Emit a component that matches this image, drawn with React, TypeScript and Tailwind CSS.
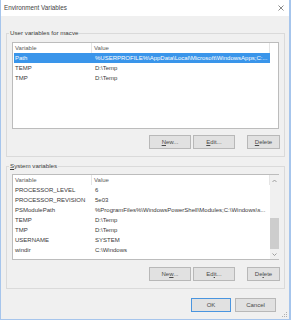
import React from "react";

type Variable = { name: string; value: string };

const userVars: Variable[] = [
    { name: "Path", value: "%USERPROFILE%\\AppData\\Local\\Microsoft\\WindowsApps;C:..." },
    { name: "TEMP", value: "D:\\Temp" },
    { name: "TMP", value: "D:\\Temp" },
];

const systemVars: Variable[] = [
    { name: "PROCESSOR_LEVEL", value: "6" },
    { name: "PROCESSOR_REVISION", value: "5e03" },
    { name: "PSModulePath", value: "%ProgramFiles%\\WindowsPowerShell\\Modules;C:\\Windows\\s..." },
    { name: "TEMP", value: "D:\\Temp" },
    { name: "TMP", value: "D:\\Temp" },
    { name: "USERNAME", value: "SYSTEM" },
    { name: "windir", value: "C:\\Windows" },
];

// label with one underlined access key, e.g. "Ne&w..."
function Mnemonic({ label }: { label: string }) {
    const i = label.indexOf("&");
    if (i < 0) return <>{label}</>;
    return (
        <>
            {label.slice(0, i)}
            <span className="underline underline-offset-1">{label[i + 1]}</span>
            {label.slice(i + 2)}
        </>
    );
}

function WinButton({ label, width, primary }: { label: string; width: string; primary?: boolean }) {
    return (
        <button
            className={`${width} h-[14px] flex items-center justify-center bg-[#e1e1e1] text-[#4a4a4a] leading-none border ${
                primary ? "border-[#4a95df]" : "border-[#b8b8b8]"
            }`}
        >
            <Mnemonic label={label} />
        </button>
    );
}

function ListHeader() {
    return (
        <div className="flex h-[10px] w-[256px] ml-[1px] items-center text-[#5c5c5c]">
            <div className="w-[78px] h-full flex items-center pl-[1px] border-r border-[#e5e5e5]">Variable</div>
            <div className="flex-1 h-full flex items-center pl-[2px] border-r border-[#e5e5e5]">Value</div>
        </div>
    );
}

function ListRow({ v, selected }: { v: Variable; selected?: boolean }) {
    return (
        <div
            className={`flex h-[10px] w-[256px] ml-[1px] items-center ${
                selected ? "bg-[#3a95ea] text-white" : "text-[#3a3a3a]"
            }`}
        >
            <div className="w-[79px] pl-[1px] whitespace-nowrap overflow-hidden">{v.name}</div>
            <div className="flex-1 pl-[2px] whitespace-nowrap overflow-hidden">{v.value}</div>
        </div>
    );
}

function ScrollBar() {
    return (
        <div className="w-[9px] h-full bg-[#f0f0f0] flex flex-col items-center">
            <svg width="9" height="11" viewBox="0 0 9 11" className="shrink-0">
                <path d="M2.5 7 L4.5 5 L6.5 7" fill="none" stroke="#8a8a8a" strokeWidth="0.8" />
            </svg>
            <div className="flex-1 w-full flex flex-col">
                <div className="h-[32px]" />
                <div className="h-[31px] w-full bg-[#cdcdcd]" />
            </div>
            <svg width="9" height="9" viewBox="0 0 9 9" className="shrink-0">
                <path d="M2.5 3.5 L4.5 5.5 L6.5 3.5" fill="none" stroke="#8a8a8a" strokeWidth="0.8" />
            </svg>
        </div>
    );
}

function ButtonRow({ labels, mt }: { labels: [string, string, string]; mt: string }) {
    return (
        <div className={`flex ${mt}`}>
            <div className="ml-[137px]">
                <WinButton label={labels[0]} width="w-[42px]" />
            </div>
            <div className="ml-[2px]">
                <WinButton label={labels[1]} width="w-[42px]" />
            </div>
            <div className="ml-[12px]">
                <WinButton label={labels[2]} width="w-[33px]" />
            </div>
        </div>
    );
}

export default function App() {
    return (
        <div className="w-[291px] h-[320px] flex flex-col bg-[#f0f0f0] border-l border-r-2 border-b border-[#a6c5ec] text-[6px] font-['Liberation_Sans',Arial,sans-serif] overflow-hidden">
            {/* TITLE BAR */}
            <div className="h-[16px] bg-white flex items-center justify-between pl-[3px] pr-[5px] shrink-0">
                <span className="text-[#444] text-[6.3px]">Environment Variables</span>
                <svg width="6" height="6" viewBox="0 0 6 6">
                    <path d="M0.5 0.5 L5.5 5.5 M5.5 0.5 L0.5 5.5" stroke="#6b6b6b" strokeWidth="0.8" />
                </svg>
            </div>

            {/* USER VARIABLES */}
            <fieldset className="mt-[13px] ml-[5px] mr-[4px] border border-[#dadada] px-[5px] pt-[5px] pb-[7px] min-w-0">
                <legend className="ml-[-3px] px-[1px] leading-[8px] text-[#3a3a3a] text-[6.2px]">User variables for macve</legend>
                <div className="h-[87px] border border-[#bcbcbc] bg-white">
                    <ListHeader />
                    {userVars.map((v, i) => (
                        <ListRow key={v.name} v={v} selected={i === 0} />
                    ))}
                </div>
                <ButtonRow labels={["&New...", "&Edit...", "&Delete"]} mt="mt-[6px]" />
            </fieldset>

            {/* SYSTEM VARIABLES */}
            <fieldset className="mt-[5px] ml-[5px] mr-[4px] border border-[#dadada] px-[5px] pt-[4px] pb-[7px] min-w-0">
                <legend className="ml-[-3px] px-[1px] leading-[8px] text-[#3a3a3a] text-[6.2px]">
                    <span className="underline underline-offset-1">S</span>ystem variables
                </legend>
                <div className="h-[86px] border border-[#bcbcbc] bg-white flex">
                    <div className="flex-1">
                        <ListHeader />
                        {systemVars.map((v) => (
                            <ListRow key={v.name + v.value} v={v} />
                        ))}
                    </div>
                    <ScrollBar />
                </div>
                <ButtonRow labels={["Ne&w...", "Ed&it...", "De&lete"]} mt="mt-[7px]" />
            </fieldset>

            {/* DIALOG BUTTONS */}
            <div className="flex justify-end gap-[4px] pr-[13px] mt-[9px]">
                <WinButton label="OK" width="w-[40px]" primary />
                <WinButton label="Cancel" width="w-[41px]" />
            </div>

            {/* RESIZE GRIP */}
            <div className="flex justify-end pr-[1px] mt-auto mb-[1px]">
                <svg width="6" height="6" viewBox="0 0 6 6">
                    <rect x="4" y="0" width="1" height="1" fill="#b0b0b0" />
                    <rect x="2" y="2" width="1" height="1" fill="#b0b0b0" />
                    <rect x="4" y="2" width="1" height="1" fill="#b0b0b0" />
                    <rect x="0" y="4" width="1" height="1" fill="#b0b0b0" />
                    <rect x="2" y="4" width="1" height="1" fill="#b0b0b0" />
                    <rect x="4" y="4" width="1" height="1" fill="#b0b0b0" />
                </svg>
            </div>
        </div>
    );
}
